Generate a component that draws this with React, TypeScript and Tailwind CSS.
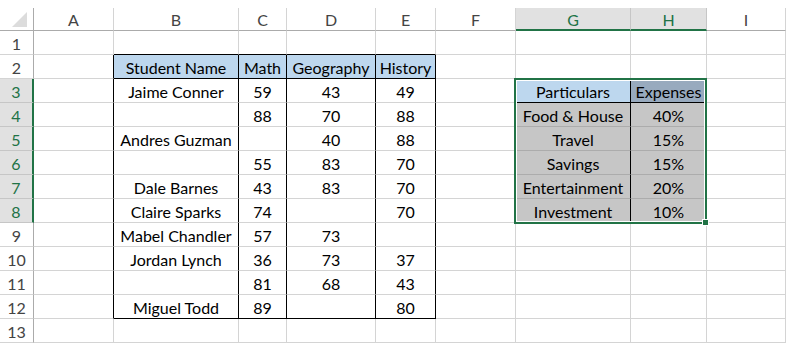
import React from 'react'

const COLS = ['A', 'B', 'C', 'D', 'E', 'F', 'G', 'H', 'I']

// sheet contents keyed by row number, one entry per column A..I
const DATA: Record<number, string[]> = {
  2: ['', 'Student Name', 'Math', 'Geography', 'History', '', '', '', ''],
  3: ['', 'Jaime Conner', '59', '43', '49', '', 'Particulars', 'Expenses', ''],
  4: ['', '', '88', '70', '88', '', 'Food & House', '40%', ''],
  5: ['', 'Andres Guzman', '', '40', '88', '', 'Travel', '15%', ''],
  6: ['', '', '55', '83', '70', '', 'Savings', '15%', ''],
  7: ['', 'Dale Barnes', '43', '83', '70', '', 'Entertainment', '20%', ''],
  8: ['', 'Claire Sparks', '74', '', '70', '', 'Investment', '10%', ''],
  9: ['', 'Mabel Chandler', '57', '73', '', '', '', '', ''],
  10: ['', 'Jordan Lynch', '36', '73', '37', '', '', '', ''],
  11: ['', '', '81', '68', '43', '', '', '', ''],
  12: ['', 'Miguel Todd', '89', '', '80', '', '', '', ''],
}

const ROWS = [1, 2, 3, 4, 5, 6, 7, 8, 9, 10, 11, 12, 13]

const selectedRows = (r: number) => r >= 3 && r <= 8
const selectedCols = (c: string) => c === 'G' || c === 'H'

function cellClasses(row: number, ci: number) {
  const col = COLS[ci]
  const inStudents = row >= 2 && row <= 12
  let right = 'border-r-[#d4d4d4]'
  let bottom = 'border-b-[#d4d4d4]'
  let bg = 'bg-white'

  // student table: A..E right edges black, header/footer lines black
  if (inStudents && ci <= 4) right = 'border-r-black'
  if ((row === 1 || row === 2 || row === 12) && ci >= 1 && ci <= 4) bottom = 'border-b-black'

  // expenses block G3:H8
  if (row >= 3 && row <= 8 && (col === 'G' || col === 'H')) {
    if (col === 'G') right = 'border-r-black'
    bottom = row === 3 ? 'border-b-black' : 'border-b-[#acacac]'
    if (row === 3) bg = col === 'G' ? 'bg-[#bdd7ee]' : 'bg-[#98aabe]'
    else bg = 'bg-[#c6c6c6]'
  }
  if (row === 2 && ci >= 1 && ci <= 4) bg = 'bg-[#bdd7ee]'

  return `${bg} border-r border-b ${right} ${bottom}`
}

export default function App() {
  return (
    <div className="relative w-[786px] h-[348px] overflow-hidden bg-white pt-2 font-[Lato,'Open_Sans',sans-serif] text-[16px] text-black">
      <div className="grid grid-cols-[34px_80px_125px_48px_89px_60px_80px_115px_76px_1fr] grid-rows-[23px] auto-rows-[24px]">
        {/* column headers */}
        <div className="border-r border-b border-r-[#ababab] border-b-[#ababab] flex items-end justify-end pr-[6px] pb-[3px]">
          <div className="w-0 h-0 border-l-[15px] border-l-transparent border-b-[15px] border-b-[#dcdcdc]" />
        </div>
        {COLS.map((c) =>
          selectedCols(c) ? (
            <div
              key={c}
              className="bg-[#e1e1e1] text-[#217346] border-r border-r-[#c6c6c6] border-b-2 border-b-[#217346] flex items-center justify-center leading-none pt-[2px]"
            >
              {c}
            </div>
          ) : (
            <div
              key={c}
              className="text-[#444] border-r border-r-[#d4d4d4] border-b border-b-[#ababab] flex items-center justify-center leading-none pt-[2px]"
            >
              {c}
            </div>
          )
        )}

        {ROWS.map((r) => (
          <React.Fragment key={r}>
            {selectedRows(r) ? (
              <div className="bg-[#e1e1e1] text-[#217346] border-r-2 border-r-[#217346] border-b border-b-[#c6c6c6] flex items-center justify-center leading-none pt-[3px]">
                {r}
              </div>
            ) : (
              <div className="text-[#444] border-r border-r-[#ababab] border-b border-b-[#d4d4d4] flex items-center justify-center leading-none pt-[3px]">
                {r}
              </div>
            )}
            {COLS.map((c, ci) => (
              <div
                key={c}
                className={`${cellClasses(r, ci)} flex items-center justify-center whitespace-nowrap overflow-visible leading-none pt-[3px]`}
              >
                {DATA[r]?.[ci] ?? ''}
              </div>
            ))}
          </React.Fragment>
        ))}
      </div>

      {/* selection frame around G3:H8 with fill handle */}
      <div className="absolute left-[514px] top-[78px] w-[193px] h-[146px] border-2 border-[#217346] shadow-[inset_0_0_0_1px_white] pointer-events-none" />
      <div className="absolute left-[702px] top-[219px] w-[7px] h-[7px] bg-[#217346] border border-white pointer-events-none" />
    </div>
  )
}
